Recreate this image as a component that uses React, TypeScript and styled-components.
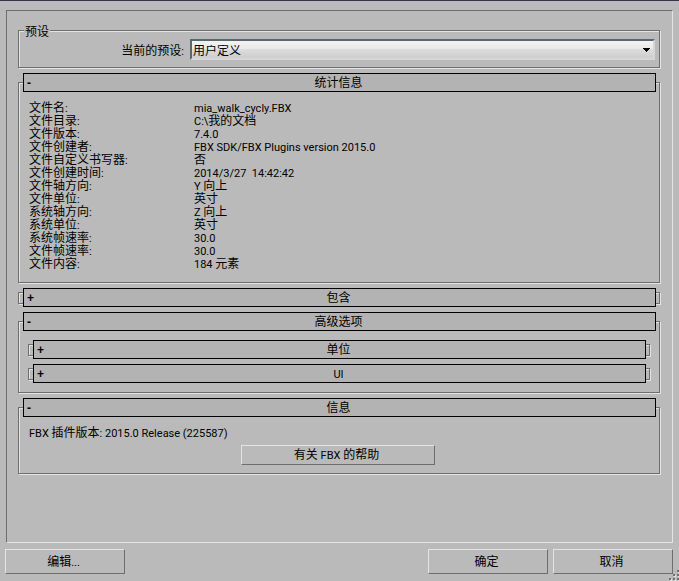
import React, { useState } from "react";
import styled, { createGlobalStyle, css } from "styled-components";

const color = {
  face: "#bababa",
  header: "#b3b3b3",
  shade: "#6e6e6e",
  light: "#e4e4e4",
  ink: "#000000",
};

const GlobalStyle = createGlobalStyle`
  *, *::before, *::after { box-sizing: border-box; }
  body {
    margin: 0;
    background: ${color.face};
    color: ${color.ink};
    font: 12px/13px Roboto, "Noto Sans CJK SC", sans-serif;
  }
  button, select { font: inherit; color: inherit; }
`;

const etched = css`
  border: 1px solid ${color.shade};
  box-shadow: 1px 1px 0 ${color.light}, inset 1px 1px 0 ${color.light};
`;

const Dialog = styled.main`
  position: relative;
  display: flex;
  flex-direction: column;
  gap: 6px;
  min-height: 100vh;
  padding: 9px 6px 7px 5px;
  border-top: 1px solid #33364a;
`;

const Panel = styled.div`
  flex: 1;
  display: flex;
  flex-direction: column;
  gap: 5px;
  margin-left: 1px;
  padding: 13px 12px 13px 11px;
  border: 1px solid;
  border-color: ${color.shade} ${color.light} ${color.light} ${color.shade};
`;

const PresetGroup = styled.fieldset`
  ${etched}
  min-width: 0;
  margin: 0;
  padding: 2px 4px 7px 0;
`;

const PresetLegend = styled.legend`
  margin-left: 5px;
  padding: 4px 1px 0;
  line-height: 9px;
  background: ${color.face};
`;

const PresetRow = styled.div`
  display: flex;
  align-items: center;
  gap: 6px;
`;

const PresetLabel = styled.label`
  flex: 0 0 165px;
  padding-top: 3px;
  text-align: right;
`;

const SelectBox = styled.div`
  flex: 1;
  display: grid;
  align-items: center;
`;

const PresetSelect = styled.select`
  grid-area: 1 / 1;
  appearance: none;
  width: 100%;
  height: 21px;
  padding: 3px 20px 0 1px;
  border: 2px solid;
  border-color: #5d666e #d6d6d6 #d6d6d6 #5d666e;
  border-radius: 0;
  background: linear-gradient(#f3f3f3, #e8e8e8 50%, #dcdcdc 50%, #cecece);
`;

const Arrow = styled.svg`
  grid-area: 1 / 1;
  justify-self: end;
  margin-right: 5px;
  pointer-events: none;
`;

const SectionSlot = styled.section<{ $open: boolean }>`
  padding: ${(p) => (p.$open ? "9px 0 0" : "4px 0 3px")};
`;

const SectionFrame = styled.div`
  ${etched}
`;

const SectionHeader = styled.button<{ $open: boolean }>`
  display: grid;
  grid-template-columns: 12px 1fr 14px;
  align-items: center;
  width: calc(100% - 7px);
  height: 19px;
  margin: ${(p) => (p.$open ? "-10px 3px 0 4px" : "-5px 3px -4px 4px")};
  padding: 1px 3px 0;
  border: 1px solid ${color.ink};
  background: ${color.header};
  text-align: center;
`;

const Sign = styled.span`
  font-family: "Liberation Sans", sans-serif;
  font-weight: bold;
  text-align: left;
`;

const LatinRun = styled.span`
  font-size: 11px;
  line-height: 11px;
  white-space: pre;
`;

const Facts = styled.dl`
  display: grid;
  grid-template-columns: 165px 1fr;
  margin: 0;
  padding: 10px 10px 11px;
`;

const FactName = styled.dt`
  height: 13px;
`;

const FactValue = styled.dd`
  height: 13px;
  margin: 0;
`;

const Nested = styled.div`
  display: flex;
  flex-direction: column;
  gap: 5px;
  padding: 9px;
`;

const About = styled.div`
  display: flex;
  flex-direction: column;
  gap: 5px;
  padding: 10px 12px 8px 10px;
`;

const Version = styled.p`
  margin: 0;
`;

const PushButton = styled.button<{ $help?: boolean }>`
  width: ${(p) => (p.$help ? 194 : 120)}px;
  height: ${(p) => (p.$help ? 20 : 25)}px;
  align-self: center;
  padding: ${(p) => (p.$help ? "0 3px 0 0" : "2px 3px 0 0")};
  border: 1px solid;
  border-color: ${color.light} ${color.shade} ${color.shade} ${color.light};
  background: ${color.face};
`;

const Footer = styled.footer`
  display: flex;
  gap: 5px;
`;

const Spacer = styled.div`
  flex: 1;
`;

const Grip = styled.svg`
  position: absolute;
  right: 0;
  bottom: 0;
`;

/* Latin letters and digits are set one size below the Chinese text. */
function Mixed({ text }: { text: string }) {
  const runs = text.match(/[\x20-\x7e]+|[^\x20-\x7e]+/g) ?? [];
  return (
    <>
      {runs.map((run, i) =>
        /^[\x20-\x7e]/.test(run) ? <LatinRun key={i}>{run}</LatinRun> : <span key={i}>{run}</span>
      )}
    </>
  );
}

type SectionProps = {
  title: string;
  defaultOpen?: boolean;
  children?: React.ReactNode;
};

function Section({ title, defaultOpen = false, children }: SectionProps) {
  const [open, setOpen] = useState(defaultOpen);
  return (
    <SectionSlot $open={open}>
      <SectionFrame>
        <SectionHeader type="button" $open={open} aria-expanded={open} onClick={() => setOpen(!open)}>
          <Sign>{open ? "-" : "+"}</Sign>
          <span>
            <Mixed text={title} />
          </span>
        </SectionHeader>
        {open && children}
      </SectionFrame>
    </SectionSlot>
  );
}

const facts: [string, string][] = [
  ["文件名:", "mia_walk_cycly.FBX"],
  ["文件目录:", "C:\\我的文档"],
  ["文件版本:", "7.4.0"],
  ["文件创建者:", "FBX SDK/FBX Plugins version 2015.0"],
  ["文件自定义书写器:", "否"],
  ["文件创建时间:", "2014/3/27  14:42:42"],
  ["文件轴方向:", "Y 向上"],
  ["文件单位:", "英寸"],
  ["系统轴方向:", "Z 向上"],
  ["系统单位:", "英寸"],
  ["系统帧速率:", "30.0"],
  ["文件帧速率:", "30.0"],
  ["文件内容:", "184 元素"],
];

const gripDots = [
  [8, 0],
  [4, 4],
  [8, 4],
  [0, 8],
  [4, 8],
  [8, 8],
];

export default function App() {
  return (
    <>
      <GlobalStyle />
      <Dialog>
        <Panel>
          <PresetGroup>
            <PresetLegend>预设</PresetLegend>
            <PresetRow>
              <PresetLabel htmlFor="preset">
                <Mixed text="当前的预设:" />
              </PresetLabel>
              <SelectBox>
                <PresetSelect id="preset">
                  <option>用户定义</option>
                </PresetSelect>
                <Arrow width="7" height="4" viewBox="0 0 7 4" shapeRendering="crispEdges" aria-hidden="true">
                  <path d="M0 0h7v1H6v1H5v1H4v1H3V3H2V2H1V1H0z" />
                </Arrow>
              </SelectBox>
            </PresetRow>
          </PresetGroup>

          <Section title="统计信息" defaultOpen>
            <Facts>
              {facts.map(([name, value]) => (
                <React.Fragment key={name}>
                  <FactName>
                    <Mixed text={name} />
                  </FactName>
                  <FactValue>
                    <Mixed text={value} />
                  </FactValue>
                </React.Fragment>
              ))}
            </Facts>
          </Section>

          <Section title="包含" />

          <Section title="高级选项" defaultOpen>
            <Nested>
              <Section title="单位" />
              <Section title="UI" />
            </Nested>
          </Section>

          <Section title="信息" defaultOpen>
            <About>
              <Version>
                <Mixed text="FBX 插件版本: 2015.0 Release (225587)" />
              </Version>
              <PushButton type="button" $help>
                <Mixed text="有关 FBX 的帮助" />
              </PushButton>
            </About>
          </Section>
        </Panel>

        <Footer>
          <PushButton type="button">
            <Mixed text="编辑..." />
          </PushButton>
          <Spacer />
          <PushButton type="button">确定</PushButton>
          <PushButton type="button">取消</PushButton>
        </Footer>

        <Grip width="10" height="11" viewBox="0 0 10 11" shapeRendering="crispEdges" aria-hidden="true">
          {gripDots.map(([x, y]) => (
            <g key={`${x}-${y}`}>
              <rect x={x + 1} y={y + 1} width="2" height="2" fill={color.light} />
              <rect x={x} y={y} width="2" height="2" fill={color.shade} />
            </g>
          ))}
        </Grip>
      </Dialog>
    </>
  );
}
